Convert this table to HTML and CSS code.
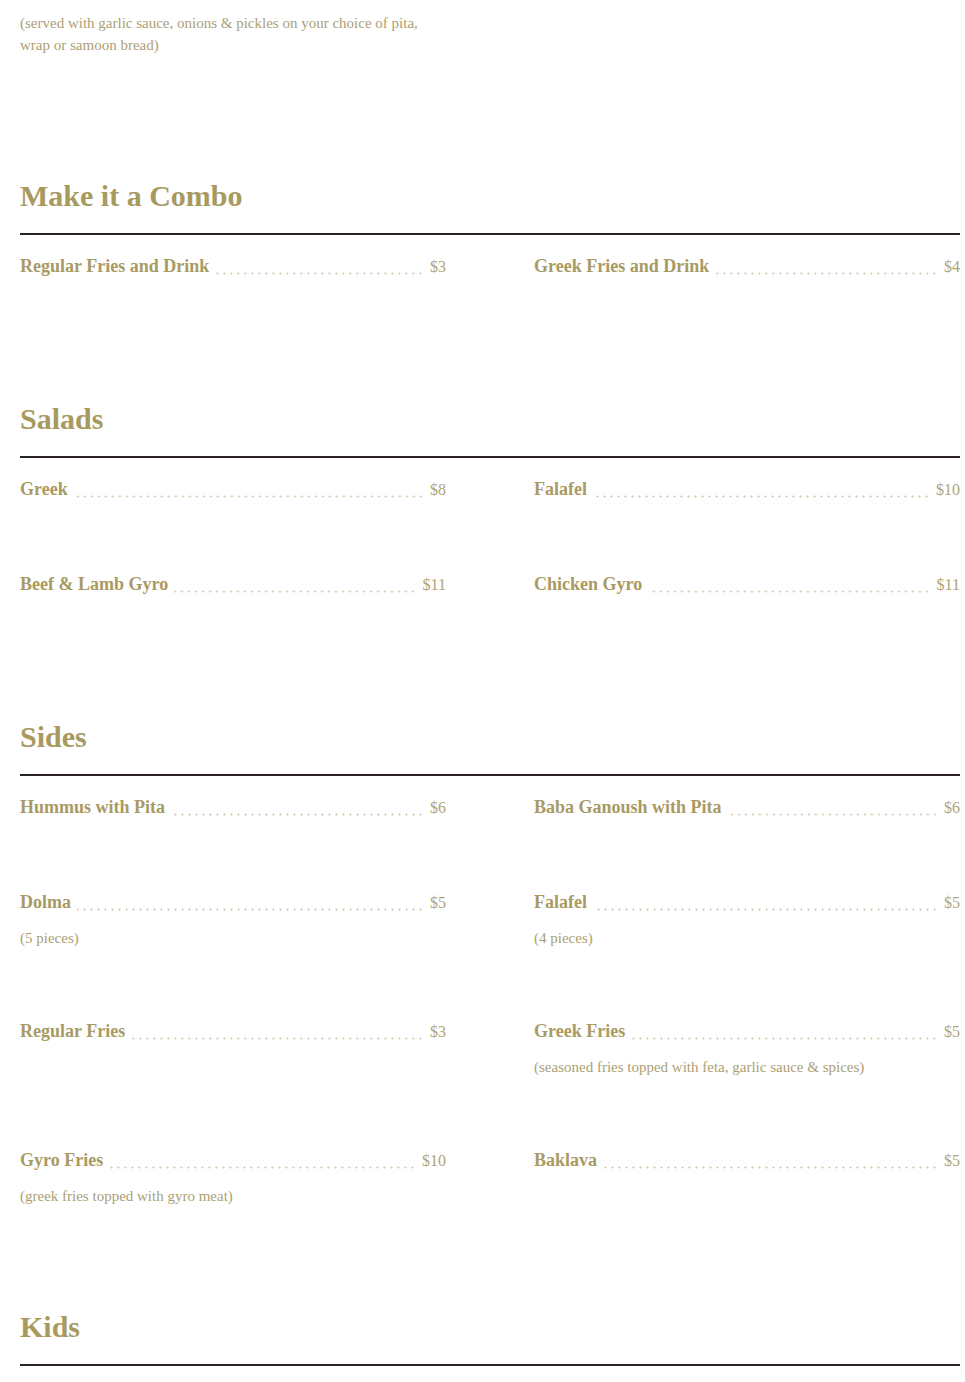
FILE: index.html
```html
<!DOCTYPE html>
<html lang="en">
<head>
<meta charset="utf-8">
<title>Menu</title>
<link rel="stylesheet" href="styles.css">
</head>
<body>
<main class="menu">
  <div class="items intro">
    <div class="item">
      <p class="desc">(served with garlic sauce, onions &amp; pickles on your choice of pita, wrap or samoon bread)</p>
    </div>
  </div>

  <section class="section">
    <h2 class="section-title">Make it a Combo</h2>
    <div class="items">
      <div class="item"><div class="row"><span class="name">Regular Fries and Drink</span><span class="dots"></span><span class="price">$3</span></div></div>
      <div class="item"><div class="row"><span class="name">Greek Fries and Drink</span><span class="dots"></span><span class="price">$4</span></div></div>
    </div>
  </section>

  <section class="section">
    <h2 class="section-title">Salads</h2>
    <div class="items">
      <div class="item"><div class="row"><span class="name">Greek</span><span class="dots"></span><span class="price">$8</span></div></div>
      <div class="item"><div class="row"><span class="name">Falafel</span><span class="dots"></span><span class="price">$10</span></div></div>
      <div class="item"><div class="row"><span class="name">Beef &amp; Lamb Gyro</span><span class="dots"></span><span class="price">$11</span></div></div>
      <div class="item"><div class="row"><span class="name">Chicken Gyro</span><span class="dots"></span><span class="price">$11</span></div></div>
    </div>
  </section>

  <section class="section">
    <h2 class="section-title">Sides</h2>
    <div class="items">
      <div class="item"><div class="row"><span class="name">Hummus with Pita</span><span class="dots"></span><span class="price">$6</span></div></div>
      <div class="item"><div class="row"><span class="name">Baba Ganoush with Pita</span><span class="dots"></span><span class="price">$6</span></div></div>
      <div class="item"><div class="row"><span class="name">Dolma</span><span class="dots"></span><span class="price">$5</span></div><p class="desc">(5 pieces)</p></div>
      <div class="item"><div class="row"><span class="name">Falafel</span><span class="dots"></span><span class="price">$5</span></div><p class="desc">(4 pieces)</p></div>
      <div class="item"><div class="row"><span class="name">Regular Fries</span><span class="dots"></span><span class="price">$3</span></div></div>
      <div class="item"><div class="row"><span class="name">Greek Fries</span><span class="dots"></span><span class="price">$5</span></div><p class="desc">(seasoned fries topped with feta, garlic sauce &amp; spices)</p></div>
      <div class="item"><div class="row"><span class="name">Gyro Fries</span><span class="dots"></span><span class="price">$10</span></div><p class="desc last">(greek fries topped with gyro meat)</p></div>
      <div class="item"><div class="row"><span class="name">Baklava</span><span class="dots"></span><span class="price">$5</span></div></div>
    </div>
  </section>

  <section class="section">
    <h2 class="section-title">Kids</h2>
  </section>
</main>
</body>
</html>
```
FILE: styles.css
```css
html, body {
  margin: 0;
  padding: 0;
  background: #ffffff;
}

body {
  font-family: "Liberation Serif", "Times New Roman", serif;
  color: #a89a66;
}

.menu {
  width: 940px;
  margin-left: 20px;
  padding-top: 12px;
}

.items {
  display: grid;
  grid-template-columns: 426px 426px;
  column-gap: 88px;
  row-gap: 69px;
}

.section-title {
  margin: 120px 0 0;
  padding-bottom: 17px;
  border-bottom: 2px solid #2b2320;
  font-size: 30px;
  line-height: 40px;
  font-weight: bold;
  color: #a89a5f;
}

.section-title + .items {
  margin-top: 18px;
}

.row {
  display: flex;
  align-items: baseline;
  height: 26px;
  line-height: 26px;
}

.name {
  font-size: 18px;
  font-weight: bold;
  color: #a89a62;
  white-space: nowrap;
}

.dots {
  flex: 1;
  align-self: stretch;
  margin: 0 6px 0 6px;
  background-image: radial-gradient(circle, #d3ccb3 0.9px, transparent 1.2px);
  background-size: 7px 3px;
  background-repeat: repeat-x;
  background-position: right 0 bottom 4px;
}

.price {
  font-size: 16px;
  color: #b0a478;
  white-space: nowrap;
}

.desc {
  margin: 12px 0 0;
  font-size: 15px;
  line-height: 22px;
  color: #ab9f75;
}

.intro .desc {
  margin-top: 0;
}

.desc.last {
  margin-bottom: -20px;
}
```
